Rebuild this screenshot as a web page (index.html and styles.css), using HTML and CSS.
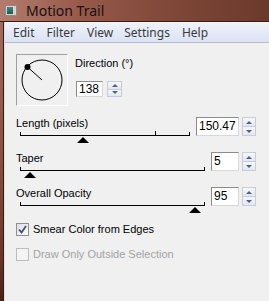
FILE: index.html
```html
<!DOCTYPE html>
<html lang="en">
<head>
  <meta charset="UTF-8" />
  <title>Motion Trail</title>
  <link rel="stylesheet" href="styles.css">
</head>
<body>
  <div class="window">
    <!-- Barra de título -->
    <div class="titlebar">
      <span class="app-icon"><span class="app-icon-inner"></span></span>
      <span class="title">Motion Trail</span>
    </div>

    <div class="frame">
      <div class="frame-left"></div>
      <div class="client">
        <!-- Menú -->
        <div class="menubar">
          <span class="menu-item">Edit</span>
          <span class="menu-item">Filter</span>
          <span class="menu-item">View</span>
          <span class="menu-item">Settings</span>
          <span class="menu-item">Help</span>
        </div>

        <div class="panel">
          <!-- Dirección -->
          <div class="direction">
            <div class="dial">
              <svg width="50" height="50" viewBox="0 0 50 50">
                <circle cx="25" cy="25" r="20" fill="none" stroke="#000" stroke-width="1"/>
                <line x1="25" y1="25" x2="10.5" y2="12" stroke="#000" stroke-width="1"/>
                <circle cx="10.5" cy="12" r="3" fill="#000"/>
              </svg>
            </div>
            <div class="dir-side">
              <div class="label">Direction (°)</div>
              <div class="dir-value">
                <div class="field field-dir">138</div>
                <div class="spin spin-dir">
                  <span class="spin-half"><span class="arrow-up"></span></span>
                  <span class="spin-half"><span class="arrow-down"></span></span>
                </div>
              </div>
            </div>
          </div>

          <!-- Longitud -->
          <div class="slider-row row-length">
            <div class="slider-col col-length">
              <div class="label">Length (pixels)</div>
              <div class="track">
                <span class="tick" style="left:80%"></span>
                <span class="thumb" style="left:37%"></span>
              </div>
            </div>
            <div class="value">
              <div class="field field-wide">150.47</div>
              <div class="spin">
                <span class="spin-half"><span class="arrow-up"></span></span>
                <span class="spin-half"><span class="arrow-down"></span></span>
              </div>
            </div>
          </div>

          <!-- Taper -->
          <div class="slider-row">
            <div class="slider-col col-wide">
              <div class="label">Taper</div>
              <div class="track">
                <span class="thumb" style="left:5%"></span>
              </div>
            </div>
            <div class="value">
              <div class="field field-small">5</div>
              <div class="spin">
                <span class="spin-half"><span class="arrow-up"></span></span>
                <span class="spin-half"><span class="arrow-down"></span></span>
              </div>
            </div>
          </div>

          <!-- Opacidad -->
          <div class="slider-row">
            <div class="slider-col col-wide">
              <div class="label">Overall Opacity</div>
              <div class="track">
                <span class="thumb" style="left:95%"></span>
              </div>
            </div>
            <div class="value">
              <div class="field field-small">95</div>
              <div class="spin">
                <span class="spin-half"><span class="arrow-up"></span></span>
                <span class="spin-half"><span class="arrow-down"></span></span>
              </div>
            </div>
          </div>

          <!-- Opciones -->
          <div class="check check-first">
            <span class="box checked">
              <svg width="11" height="11" viewBox="0 0 11 11">
                <path d="M2 5.5 L4.5 8.5 L9 2" fill="none" stroke="#3b4f8c" stroke-width="1.8"/>
              </svg>
            </span>
            <span>Smear Color from Edges</span>
          </div>
          <div class="check check-disabled">
            <span class="box"></span>
            <span>Draw Only Outside Selection</span>
          </div>
        </div>
      </div>
    </div>
  </div>
</body>
</html>
```

FILE: styles.css
```css
* {
  margin: 0;
  padding: 0;
  box-sizing: border-box;
}

html, body {
  width: 269px;
  height: 301px;
  overflow: hidden;
}

body {
  font-family: "Liberation Sans", Arial, sans-serif;
  font-size: 11px;
  color: #000;
  background: #f0f0f0;
}

.window {
  display: flex;
  flex-direction: column;
  height: 301px;
}

/* Barra de título */
.titlebar {
  height: 22px;
  display: flex;
  align-items: center;
  padding-left: 5px;
  background: linear-gradient(to right, #b37c6c 0%, #97594a 30%, #7e4737 65%, #6b392b 100%);
  border-bottom: 1px solid #3a1a12;
}

.app-icon {
  width: 12px;
  height: 11px;
  border: 1px solid #8a8a8a;
  background: #d4d4d4;
  display: flex;
  padding: 1px;
}

.app-icon-inner {
  width: 6px;
  background: linear-gradient(#3f8a7e, #1f5a50);
}

.title {
  margin-left: 9px;
  font-family: "Noto Sans", sans-serif;
  font-size: 14px;
  line-height: 16px;
  color: #1a1010;
}

.frame {
  flex: 1;
  display: flex;
}

.frame-left {
  width: 4px;
  background: linear-gradient(#a66a5a, #8a4e3e 50%, #6a3424 85%, #4a2014);
  border-right: 1px solid #3a1a12;
}

.client {
  flex: 1;
  display: flex;
  flex-direction: column;
  border-left: 1px solid #e6dcd8;
}

/* Menú */
.menubar {
  height: 21px;
  display: flex;
  align-items: center;
  padding-left: 2px;
  border-top: 1px solid #f8f9fd;
  border-bottom: 1px solid #b6bdcf;
  background: linear-gradient(#eef2fb, #dbe2f3);
  font-family: "Noto Sans", sans-serif;
  font-size: 12px;
  color: #3a3a3a;
}

.menu-item {
  padding: 0 6px;
}

.menu-item:nth-child(4) {
  padding-left: 5px;
}

.panel {
  flex: 1;
  display: flex;
  flex-direction: column;
  padding: 11px 0 0 11px;
}

.label {
  line-height: 13px;
  white-space: nowrap;
}

/* Dirección */
.direction {
  display: flex;
  height: 52px;
}

.dial {
  width: 52px;
  height: 52px;
  border: 1px solid;
  border-color: #a0a0a0 #ffffff #ffffff #a0a0a0;
}

.dial svg {
  display: block;
}

.dir-side {
  margin-left: 7px;
  display: flex;
  flex-direction: column;
  padding-top: 3px;
}

.dir-value {
  display: flex;
  margin-top: 11px;
  margin-left: 1px;
  gap: 4px;
}

.field {
  height: 19px;
  background: #fff;
  border: 1px solid;
  border-color: #8c8c8c #d8d8d8 #d8d8d8 #8c8c8c;
  font-size: 12px;
  line-height: 17px;
  padding-left: 2px;
}

.field-dir {
  width: 27px;
  height: 16px;
  line-height: 14px;
}

.field-wide {
  width: 43px;
}

.field-small {
  width: 28px;
}

.spin {
  width: 14px;
  height: 19px;
  display: flex;
  flex-direction: column;
  margin-left: 3px;
  border: 1px solid #c6ccd8;
}

.spin-dir {
  width: 15px;
  height: 16px;
  margin-left: 0;
}

.spin-half {
  flex: 1;
  display: flex;
  align-items: center;
  justify-content: center;
  background: linear-gradient(#f6f7f9, #e3e7ee);
}

.spin-half + .spin-half {
  border-top: 1px solid #c6ccd8;
}

.arrow-up {
  width: 0;
  height: 0;
  border-left: 3px solid transparent;
  border-right: 3px solid transparent;
  border-bottom: 3px solid #4d6185;
}

.arrow-down {
  width: 0;
  height: 0;
  border-left: 3px solid transparent;
  border-right: 3px solid transparent;
  border-top: 3px solid #4d6185;
}

/* Deslizadores */
.slider-row {
  display: flex;
  margin-top: 16px;
}

.row-length {
  margin-top: 11px;
}

.slider-col {
  display: flex;
  flex-direction: column;
}

.col-length {
  width: 174px;
}

.col-wide {
  width: 189px;
}

.track {
  position: relative;
  height: 4px;
  margin: 2px 0 0 4px;
  border-left: 1px solid #000;
  border-right: 1px solid #000;
  border-bottom: 1px solid #000;
}

.tick {
  position: absolute;
  bottom: 0;
  width: 1px;
  height: 4px;
  background: #000;
}

.thumb {
  position: absolute;
  top: 5px;
  margin-left: -6px;
  width: 0;
  height: 0;
  border-left: 6px solid transparent;
  border-right: 6px solid transparent;
  border-bottom: 6px solid #000;
}

.value {
  display: flex;
  margin-left: 6px;
}

/* Casillas */
.check {
  display: flex;
  align-items: center;
  gap: 4px;
  height: 13px;
  line-height: 13px;
}

.check-first {
  margin-top: 17px;
}

.check-disabled {
  margin-top: 12px;
  color: #a3a3a3;
}

.box {
  width: 13px;
  height: 13px;
  border: 1px solid #bcbcbc;
  background: #f4f4f4;
}

.box.checked {
  border-color: #8e8f8f;
  background: linear-gradient(135deg, #dcdcdc, #ffffff);
  display: flex;
  align-items: center;
  justify-content: center;
}

.box svg {
  display: block;
}
```
